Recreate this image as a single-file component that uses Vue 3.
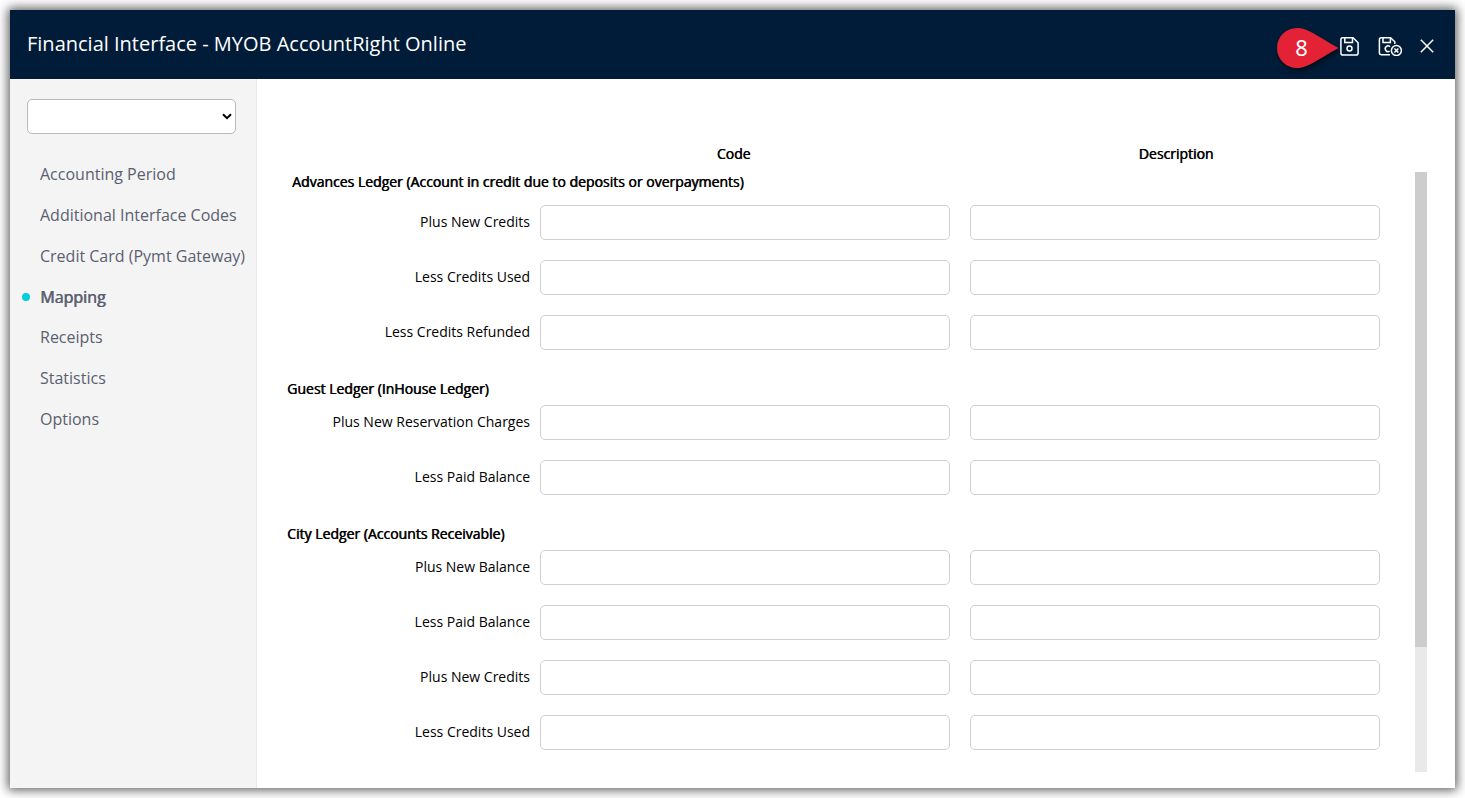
<template>
    <div class="window">
        <header class="header">
            <div class="title">Financial Interface - MYOB AccountRight Online</div>
            <div class="actions">
                <svg class="icon" width="20" height="20" viewBox="0.5 -0.5 20 20">
                    <path d="M3.2 1.2H13.6L18.6 6.2V16.4Q18.6 18.6 16.4 18.6H3.6Q1.4 18.6 1.4 16.4V3.2Q1.4 1.2 3.2 1.2Z" />
                    <path d="M5.3 1.4V6H13V1.4" />
                    <circle cx="10" cy="12" r="2.5" />
                </svg>
                <svg class="icon" width="25" height="20" viewBox="0 -0.5 25 20">
                    <path d="M12 18.2H3.6Q1.4 18.2 1.4 16.2V3.2Q1.4 1.2 3.2 1.2H12.6L16.8 5.2V7.5" />
                    <path d="M5 1.4V6H12.4V1.4" />
                    <path d="M12 10.2A2.8 2.8 0 1 0 11.6 14.6" />
                    <circle cx="18.4" cy="14" r="5" />
                    <path d="M16.4 12L20.4 16M20.4 12L16.4 16" />
                </svg>
                <svg class="icon close" width="14" height="14" viewBox="0 -0.5 14 14">
                    <path d="M0.8 0.3L13.2 12.7M13.2 0.3L0.8 12.7" />
                </svg>
            </div>
            <div class="marker">
                <svg width="62" height="40" viewBox="0 0 62 40">
                    <path d="M20 0C31 0 40 8 61.5 20C40 32 31 40 20 40A20 20 0 0 1 20 0Z" fill="#e32235" />
                </svg>
                <span>8</span>
            </div>
        </header>
        <div class="body">
            <aside class="sidebar">
                <div class="select">
                    <svg width="10" height="7" viewBox="0 0 10 7"><path d="M1 1.2L5 5.2L9 1.2" /></svg>
                </div>
                <ul class="nav">
                    <li v-for="item in menus" :key="item" :class="{ active: item == current }" @click="current = item">{{ item }}</li>
                </ul>
            </aside>
            <main class="main">
                <div class="row heads">
                    <span></span>
                    <span class="code">Code</span>
                    <span class="desc">Description</span>
                </div>
                <div class="scroll">
                    <div class="list">
                        <section v-for="group in groups" :key="group.title">
                            <h3>{{ group.title }}</h3>
                            <div v-for="row in group.rows" :key="row" class="row">
                                <label>{{ row }}</label>
                                <input type="text">
                                <input type="text">
                            </div>
                        </section>
                    </div>
                    <div class="track"><div class="thumb"></div></div>
                </div>
            </main>
        </div>
    </div>
</template>

<script setup>
import { ref } from 'vue'

const current = ref('Mapping')

const menus = [
    'Accounting Period',
    'Additional Interface Codes',
    'Credit Card (Pymt Gateway)',
    'Mapping',
    'Receipts',
    'Statistics',
    'Options'
]

const groups = [
    {
        title: 'Advances Ledger (Account in credit due to deposits or overpayments)',
        rows: ['Plus New Credits', 'Less Credits Used', 'Less Credits Refunded']
    },
    {
        title: 'Guest Ledger (InHouse Ledger)',
        rows: ['Plus New Reservation Charges', 'Less Paid Balance']
    },
    {
        title: 'City Ledger (Accounts Receivable)',
        rows: ['Plus New Balance', 'Less Paid Balance', 'Plus New Credits', 'Less Credits Used']
    }
]
</script>

<style>
body {
    background: #fff;
    overflow: hidden;
}
</style>

<style scoped>
.window {
    box-sizing: border-box;
    width: 1445px;
    height: 778px;
    margin: 10px;
    display: flex;
    flex-direction: column;
    background: #fff;
    box-shadow: 0 0 10px 2px rgba(0, 0, 0, 0.65);
    font-family: "Open Sans", "Noto Sans", sans-serif;
    font-size: 14px;
    color: #000;
}

.header {
    position: relative;
    flex: none;
    display: flex;
    justify-content: space-between;
    height: 69px;
    background: #001c38;
    color: #fff;
}

.title {
    padding-left: 17px;
    font-size: 20px;
    line-height: 68px;
}

.actions {
    display: flex;
    align-items: center;
    padding: 3px 21px 0 0;
}

.icon {
    fill: none;
    stroke: #fff;
    stroke-width: 1.5;
    margin-right: 18px;
}

.icon + .icon {
    margin-right: 17px;
}

.icon.close {
    margin: 0;
}

/* callout lies over the toolbar */
.marker {
    position: absolute;
    top: 18px;
    left: 1267px;
    width: 62px;
    height: 40px;
}

.marker svg {
    display: block;
    filter: drop-shadow(1px 3px 2px rgba(0, 0, 0, 0.5));
}

.marker span {
    position: absolute;
    top: 0;
    left: 0;
    width: 49px;
    text-align: center;
    font-family: "Noto Sans", sans-serif;
    font-size: 22px;
    line-height: 39px;
}

.body {
    flex: 1;
    display: flex;
    min-height: 0;
}

.sidebar {
    box-sizing: border-box;
    flex: none;
    width: 247px;
    padding: 20px 0 0 17px;
    background: #f4f4f4;
    border-right: 1px solid #e9e9e9;
}

.select {
    box-sizing: border-box;
    display: flex;
    align-items: center;
    justify-content: flex-end;
    width: 209px;
    height: 35px;
    padding-right: 3px;
    border: 1px solid #b9b9b9;
    border-radius: 5px;
    background: #fff;
}

.select path {
    fill: none;
    stroke: #000;
    stroke-width: 2;
}

.nav {
    list-style: none;
    margin: 20px 0 0;
    padding: 0;
}

.nav li {
    position: relative;
    height: 40.8px;
    padding-left: 13px;
    font-size: 16px;
    line-height: 40.8px;
    color: #5b6070;
    white-space: nowrap;
    cursor: pointer;
}

.nav .active {
    line-height: 42.4px;
    text-shadow: 0.7px 0 0 #5b6070;
}

.nav .active::before {
    content: "";
    position: absolute;
    left: -5px;
    top: 16.6px;
    width: 8px;
    height: 8px;
    border-radius: 50%;
    background: #00cfdd;
}

.main {
    flex: 1;
    padding-top: 65px;
}

.row {
    display: grid;
    grid-template-columns: 233px 410px 410px;
    column-gap: 20px;
    height: 35px;
    margin-bottom: 20px;
}

.heads {
    height: 20px;
    margin: 0 0 8px 30px;
    line-height: 20px;
    text-align: center;
    text-shadow: 0.6px 0 0 #000;
}

.heads .code {
    padding-right: 23px;
}

.heads .desc {
    padding-left: 2px;
}

.row label {
    margin-right: -10px;
    line-height: 33px;
    text-align: right;
    white-space: nowrap;
}

.row input {
    box-sizing: border-box;
    width: 410px;
    height: 35px;
    border: 1px solid #d0d0d0;
    border-radius: 5px;
    background: #fff;
    outline: none;
}

.scroll {
    display: flex;
    justify-content: space-between;
    height: 600px;
    padding: 0 28px 0 30px;
}

.list {
    height: 600px;
    overflow: hidden;
}

h3 {
    margin: 0;
    padding-top: 9px;
    font-size: 14px;
    font-weight: 400;
    line-height: 20px;
    height: 26px;
    text-shadow: 0.6px 0 0 #000;
}

section:first-child h3 {
    padding: 0 0 0 5px;
    height: 33px;
}

.track {
    width: 12px;
    background: #e9e9e9;
}

.thumb {
    height: 475px;
    background: #cdcdcd;
}
</style>
